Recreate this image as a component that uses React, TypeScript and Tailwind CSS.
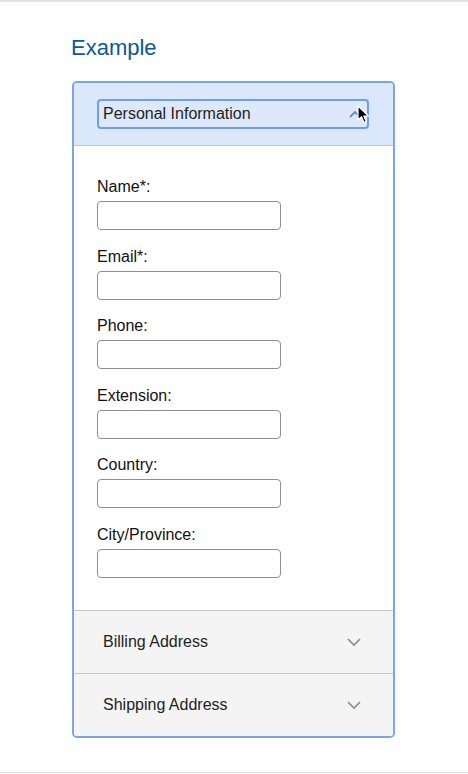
import React from 'react';

const fields = ['Name*:', 'Email*:', 'Phone:', 'Extension:', 'Country:', 'City/Province:'];

const ChevronDown: React.FC = () => (
    <svg width="16" height="10" viewBox="0 0 16 10" fill="none">
        <path d="M2 2 L8 8 L14 2" stroke="#8a8a8a" strokeWidth="1.6" />
    </svg>
);

const Cursor: React.FC = () => (
    <svg width="13" height="19" viewBox="0 0 13 19" className="absolute left-[258px] top-[4px]">
        <path d="M1 1 L1 15 L4.5 11.8 L7 17.5 L9.3 16.5 L6.8 11 L11.5 11 Z" fill="#000" stroke="#fff" strokeWidth="1.2" strokeLinejoin="round" />
    </svg>
);

const App: React.FC = () => {
    return (
        <div className="min-h-[774px] bg-white border-t-2 border-[#e2e2e2] font-['Liberation_Sans',Arial,sans-serif] text-[#222]">
            <div className="h-[771px] border-b border-[#d8d8d8] pl-[71px] pt-[33px]">
                <h1 className="text-[22px] leading-[26px] text-[#0d5698]">Example</h1>
                <div className="ml-[1px] mt-[20px] w-[323px] rounded-[5px] border-2 border-[#7ba6e6] overflow-hidden">
                    <div className="bg-[#dbe7fa] px-[23px] py-[16px] border-b border-[#c8c8c8]">
                        <button className="relative flex h-[30px] w-[272px] items-center rounded-[4px] border-2 border-[#6d9ded] bg-[#dde8fa] pl-[4px] text-[16px] text-[#1e1e1e]">
                            Personal Information
                            <svg width="12" height="8" viewBox="0 0 12 8" fill="none" className="absolute left-[250px] top-[9px]">
                                <path d="M1 7 L6 2 L11 7" stroke="#5a8de0" strokeWidth="1.8" />
                            </svg>
                            <Cursor />
                        </button>
                    </div>
                    <div className="bg-white px-[23px] pt-[32px] pb-[14px]">
                        {fields.map((label) => (
                            <div key={label} className="mb-[17.6px]">
                                <label className="block text-[16px] leading-[18px] text-[#111]">{label}</label>
                                <input className="mt-[5px] block h-[29px] w-[184px] rounded-[4px] border border-[#8f8f8f] bg-white" />
                            </div>
                        ))}
                    </div>
                    {['Billing Address', 'Shipping Address'].map((title) => (
                        <div
                            key={title}
                            className="flex h-[63px] items-center justify-between border-t border-[#c8c8c8] bg-[#f4f4f4] pl-[29px] pr-[31px] text-[16px] text-[#222]"
                        >
                            <span>{title}</span>
                            <ChevronDown />
                        </div>
                    ))}
                </div>
            </div>
        </div>
    );
};

export default App;
